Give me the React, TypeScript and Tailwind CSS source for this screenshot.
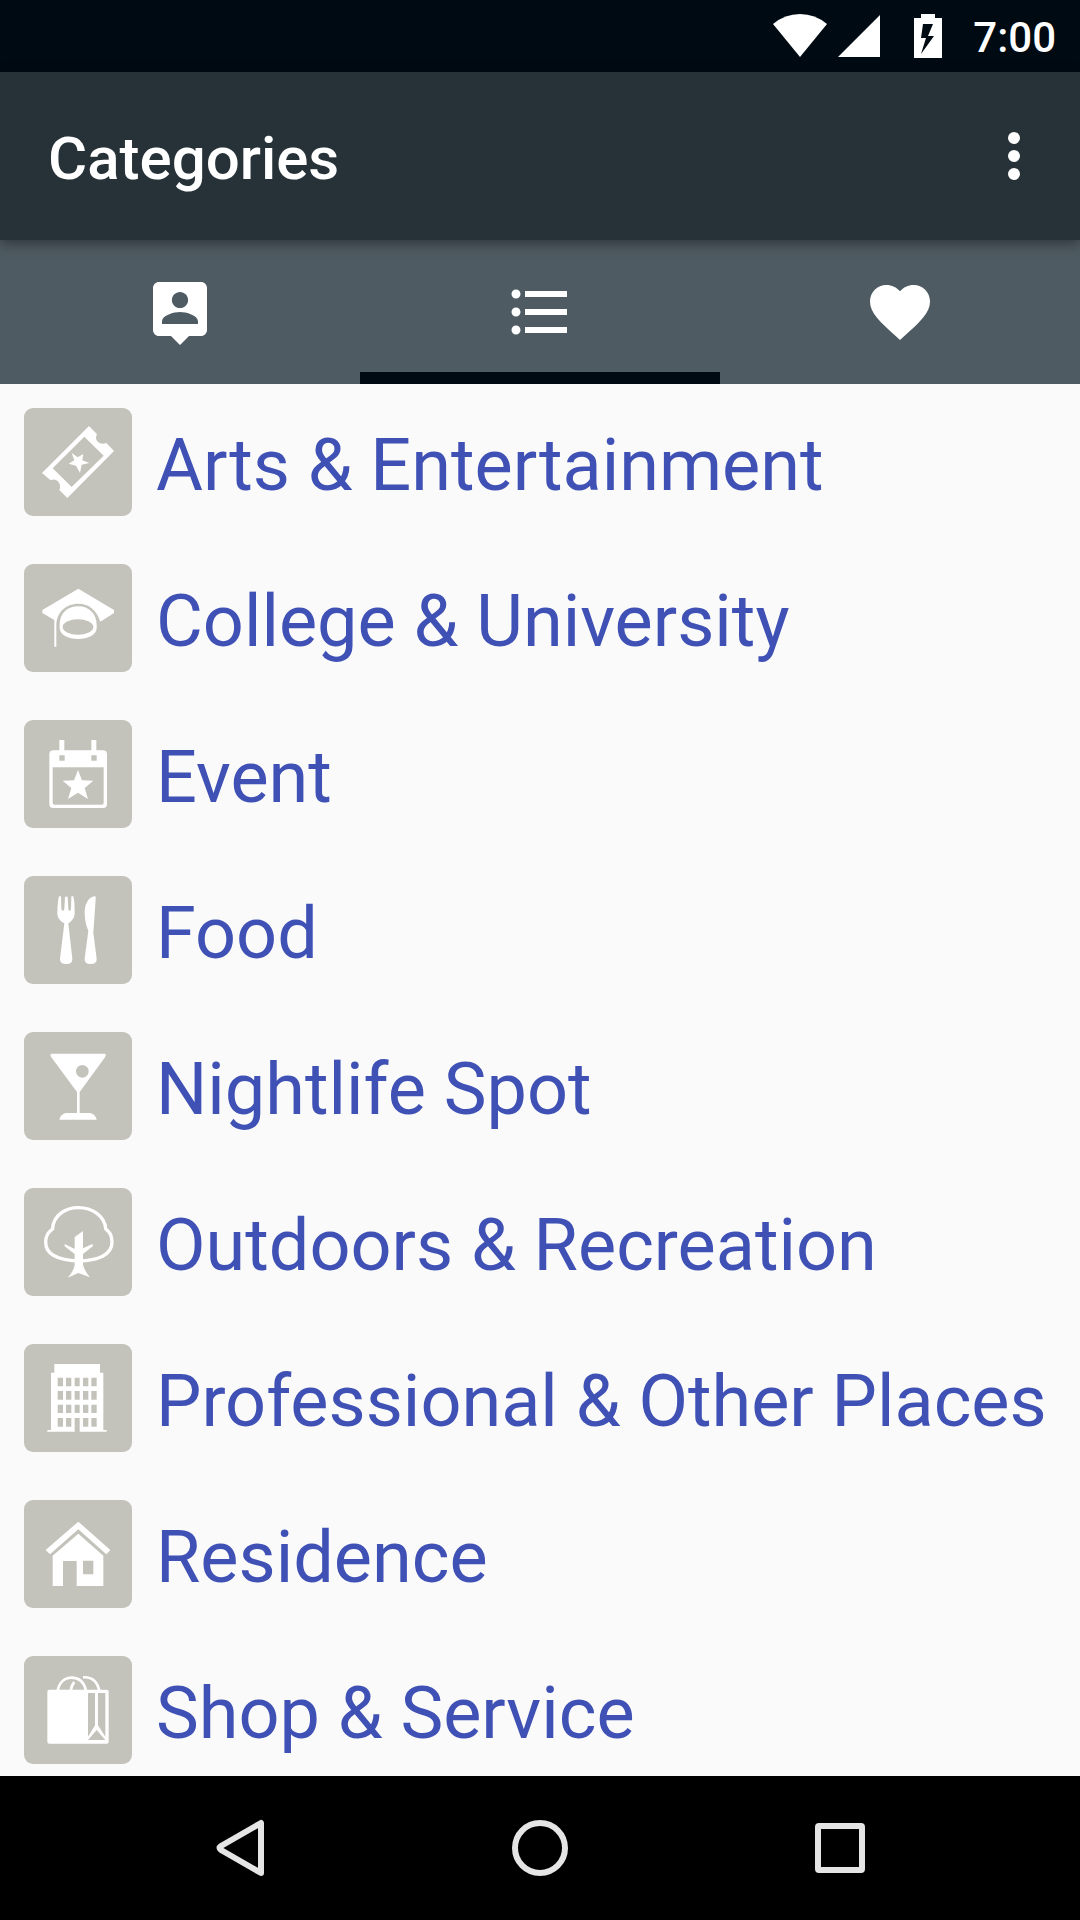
import React, { useState } from "react";

function ArtsIcon() {
  return (
    <>
      <path
        fillRule="evenodd"
        d="M195 54L219 79C209 97 226 113 247 105L270 129L130 270L106 246C115 229 97 207 80 217L54 195ZM181 86L86 181L143 237L239 143Z"
      />
      <path d="M143 135L161 148L178 138L175 157L196 165L173 170L168 195L156 173L134 167L151 157Z" />
    </>
  );
}

function CollegeIcon() {
  return (
    <>
      <path d="M163 74L270 138V147L229 173C218 138 195 119 163 119C125 119 97 145 97 185V248H91V168L55 147V138Z" />
      <path
        fillRule="evenodd"
        d="M107 182C107 148 130 127 163 127C195 127 218 150 218 182V192C218 212 192 225 163 225C132 225 107 212 107 192ZM116 189A46 23 0 0 0 208 189A46 23 0 0 0 116 189Z"
      />
    </>
  );
}

function EventIcon() {
  return (
    <>
      <path d="M106 60H121V96H106ZM202 60H217V96H202Z" />
      <path
        fillRule="evenodd"
        d="M88 91H237Q249 91 249 103V252Q249 264 237 264H88Q76 264 76 252V103Q76 91 88 91ZM86 142V248Q86 254 92 254H233Q239 254 239 248V142ZM106 106V122H122V106ZM202 106V122H218V106Z"
      />
      <path d="M162 150L174 181L208 182L182 204L192 237L162 218L132 237L142 204L116 182L150 181Z" />
    </>
  );
}

function FoodIcon() {
  return (
    <>
      <path d="M105 61H111L112 98Q113 104 117 104Q121 104 121 98L123 62H131L133 98Q133 104 137 104Q141 104 141 98L142 61H148Q152 75 152 110C152 126 144 134 133 142L145 248Q146 264 127 264Q107 264 108 248L121 142C108 134 100 126 100 110Q101 75 105 61Z" />
      <path d="M213 60Q216 61 215 70L208 170L218 248Q219 264 200 264Q181 264 182 248L193 164C183 140 182 122 182 104Q185 65 213 60Z" />
    </>
  );
}

function NightlifeIcon() {
  return (
    <path
      fillRule="evenodd"
      d="M81 65H244Q247 70 243 76L167 180V243H199Q215 248 218 263H106Q109 248 125 243H159V180L82 76Q77 70 81 65ZM156 118A19 19 0 0 0 194 118A19 19 0 0 0 156 118Z"
    />
  );
}

function OutdoorsIcon() {
  return (
    <>
      <path
        fill="none"
        stroke="currentColor"
        strokeWidth="10"
        d="M163 219C112 217 65 205 65 163C65 142 73 133 86 122C88 82 124 59 163 59C205 59 242 84 245 122C258 134 264 142 264 163C264 201 222 218 163 219Z"
      />
      <path d="M152 147L177 129V181L205 168L207 174L177 198V230Q181 248 198 268L163 255L131 269Q150 248 152 230V198L122 175V168L152 183Z" />
    </>
  );
}

function ProfessionalIcon() {
  return (
    <path
      fillRule="evenodd"
      d="M91 60H228V86H238V258H248V263H167V222H152V263H70V258H81V86H91ZM101 101V127H117V101ZM126 101V127H142V101ZM152 101V127H167V101ZM177 101V127H193V101ZM202 101V127H218V101ZM101 141V167H117V141ZM126 141V167H142V141ZM152 141V167H167V141ZM177 141V167H193V141ZM202 141V167H218V141ZM101 182V207H117V182ZM126 182V207H142V182ZM152 182V207H167V182ZM177 182V207H193V182ZM202 182V207H218V182ZM101 222V248H117V222ZM126 222V248H142V222ZM177 222V248H193V222ZM202 222V248H218V222Z"
    />
  );
}

function ResidenceIcon() {
  return (
    <>
      <path d="M163 65L259 150L247 163L163 88L78 163L65 150Z" />
      <path
        fillRule="evenodd"
        d="M163 101L238 167V258H158V183H117V258H86V167ZM177 182V223H208V182Z"
      />
    </>
  );
}

function ShopIcon() {
  return (
    <>
      <path
        fillRule="evenodd"
        d="M76 101H248Q254 101 254 107V257Q254 263 248 263H76Q70 263 70 257V107Q70 101 76 101ZM192 111V242L213 208V111ZM222 111V208L244 242V111ZM218 222L192 252H244Z"
      />
      <path
        fill="none"
        stroke="currentColor"
        strokeWidth="8"
        d="M101 104C106 78 123 65 143 65C164 65 180 78 186 104M177 64C205 62 220 78 226 104M151 78Q142 88 140 104"
      />
    </>
  );
}

const categories = [
  { name: "Arts & Entertainment", slug: "arts", Icon: ArtsIcon },
  { name: "College & University", slug: "college", Icon: CollegeIcon },
  { name: "Event", slug: "event", Icon: EventIcon },
  { name: "Food", slug: "food", Icon: FoodIcon },
  { name: "Nightlife Spot", slug: "nightlife", Icon: NightlifeIcon },
  { name: "Outdoors & Recreation", slug: "outdoors", Icon: OutdoorsIcon },
  { name: "Professional & Other Places", slug: "professional", Icon: ProfessionalIcon },
  { name: "Residence", slug: "residence", Icon: ResidenceIcon },
  { name: "Shop & Service", slug: "shop", Icon: ShopIcon },
];

const tabs = [
  {
    label: "Nearby",
    path: "M19 2H5c-1.11 0-2 .9-2 2v14c0 1.1.89 2 2 2h4l3 3 3-3h4c1.1 0 2-.9 2-2V4c0-1.1-.9-2-2-2zm-7 3.3c1.49 0 2.7 1.21 2.7 2.7 0 1.49-1.21 2.7-2.7 2.7-1.49 0-2.7-1.21-2.7-2.7 0-1.49 1.21-2.7 2.7-2.7zM18 16H6v-.9c0-2 4-3.1 6-3.1s6 1.1 6 3.1v.9z",
  },
  {
    label: "Categories",
    path: "M4 10.5c-.83 0-1.5.67-1.5 1.5s.67 1.5 1.5 1.5 1.5-.67 1.5-1.5-.67-1.5-1.5-1.5zm0-6c-.83 0-1.5.67-1.5 1.5S3.17 7.5 4 7.5 5.5 6.83 5.5 6 4.83 4.5 4 4.5zm0 12c-.83 0-1.5.67-1.5 1.5s.67 1.5 1.5 1.5 1.5-.67 1.5-1.5-.67-1.5-1.5-1.5zM7 19h14v-2H7v2zm0-6h14v-2H7v2zm0-8v2h14V5H7z",
  },
  {
    label: "Favorites",
    path: "M12 21.35l-1.45-1.32C5.4 15.36 2 12.28 2 8.5 2 5.42 4.42 3 7.5 3c1.74 0 3.41.81 4.5 2.09C13.09 3.81 14.76 3 16.5 3 19.58 3 22 5.42 22 8.5c0 3.78-3.4 6.86-8.55 11.54L12 21.35z",
  },
];

function StatusBar() {
  return (
    <div className="flex h-[72px] shrink-0 items-center justify-end bg-[#000a12] pr-6 text-white">
      <svg className="h-11 w-[54px]" viewBox="0 0 54 44" fill="currentColor" aria-hidden="true">
        <path d="M0 10Q12 0 27 0T54 10L27 43Z" />
      </svg>
      <svg className="ml-[11px] h-11 w-[42px]" viewBox="0 0 42 44" fill="currentColor" aria-hidden="true">
        <path d="M42 1V43H0Z" />
      </svg>
      <svg className="ml-[34px] h-11 w-7" viewBox="0 0 28 44" fill="currentColor" aria-hidden="true">
        <path
          fillRule="evenodd"
          d="M7 0H21V4H28V44H0V4H7ZM9 10L7 24H12L7 40L20 22H14L19 10Z"
        />
      </svg>
      <time className="ml-[31px] pt-1 text-[42px] leading-[50px] font-medium">7:00</time>
    </div>
  );
}

function Toolbar() {
  return (
    <header className="relative z-10 flex h-[168px] shrink-0 items-center justify-between bg-[#263238] pr-[30px] pl-12 text-white shadow-[0_4px_12px_rgba(0,0,0,0.4)]">
      <h1 className="pt-1.5 text-[60px] leading-[70px] font-medium">Categories</h1>
      <button type="button" aria-label="More options" className="flex size-[72px] items-center justify-center">
        <svg className="size-[72px]" viewBox="0 0 24 24" fill="currentColor" aria-hidden="true">
          <circle cx="12" cy="6" r="2" />
          <circle cx="12" cy="12" r="2" />
          <circle cx="12" cy="18" r="2" />
        </svg>
      </button>
    </header>
  );
}

function TabBar() {
  const [selected, setSelected] = useState(1);
  return (
    <div role="tablist" className="grid h-36 shrink-0 grid-cols-3 bg-[#4f5b62] text-white">
      {tabs.map((tab, i) => (
        <button
          key={tab.label}
          type="button"
          role="tab"
          aria-label={tab.label}
          aria-selected={i === selected}
          onClick={() => setSelected(i)}
          className="flex items-center justify-center border-y-12 border-transparent aria-selected:border-b-[#000a12]"
        >
          <svg className="size-[72px]" viewBox="0 0 24 24" fill="currentColor" aria-hidden="true">
            <path d={tab.path} />
          </svg>
        </button>
      ))}
    </div>
  );
}

function CategoryList() {
  return (
    <ul className="min-h-0 flex-1 overflow-y-auto [scrollbar-width:none]">
      {categories.map(({ name, slug, Icon }) => (
        <li key={slug}>
          <a href={"#" + slug} className="flex items-center gap-6 p-6 text-[#3f51b5]">
            <svg
              className="size-[108px] shrink-0 rounded-[9px] bg-[#c4c3bb] text-white"
              viewBox="0 0 324 324"
              fill="currentColor"
              aria-hidden="true"
            >
              <Icon />
            </svg>
            <span className="pt-2 text-[72px] leading-[84px] whitespace-nowrap">{name}</span>
          </a>
        </li>
      ))}
    </ul>
  );
}

function NavigationBar() {
  const shapes = [
    { label: "Back", shape: <path d="M57 11V61L17 38Q14 36 17 34Z" strokeLinejoin="round" /> },
    { label: "Home", shape: <circle cx="36" cy="36" r="25" /> },
    { label: "Recent apps", shape: <rect x="14" y="14" width="44" height="44" rx="1" /> },
  ];
  return (
    <nav className="grid h-36 shrink-0 grid-cols-3 bg-black px-[90px] text-[#e5e5e5]">
      {shapes.map(({ label, shape }) => (
        <button key={label} type="button" aria-label={label} className="flex items-center justify-center">
          <svg
            className="size-[72px]"
            viewBox="0 0 72 72"
            fill="none"
            stroke="currentColor"
            strokeWidth="6"
            aria-hidden="true"
          >
            {shape}
          </svg>
        </button>
      ))}
    </nav>
  );
}

export default function App() {
  return (
    <div className="flex h-screen flex-col overflow-hidden bg-[#fafafa] font-[Roboto,sans-serif]">
      <StatusBar />
      <Toolbar />
      <TabBar />
      <CategoryList />
      <NavigationBar />
    </div>
  );
}
